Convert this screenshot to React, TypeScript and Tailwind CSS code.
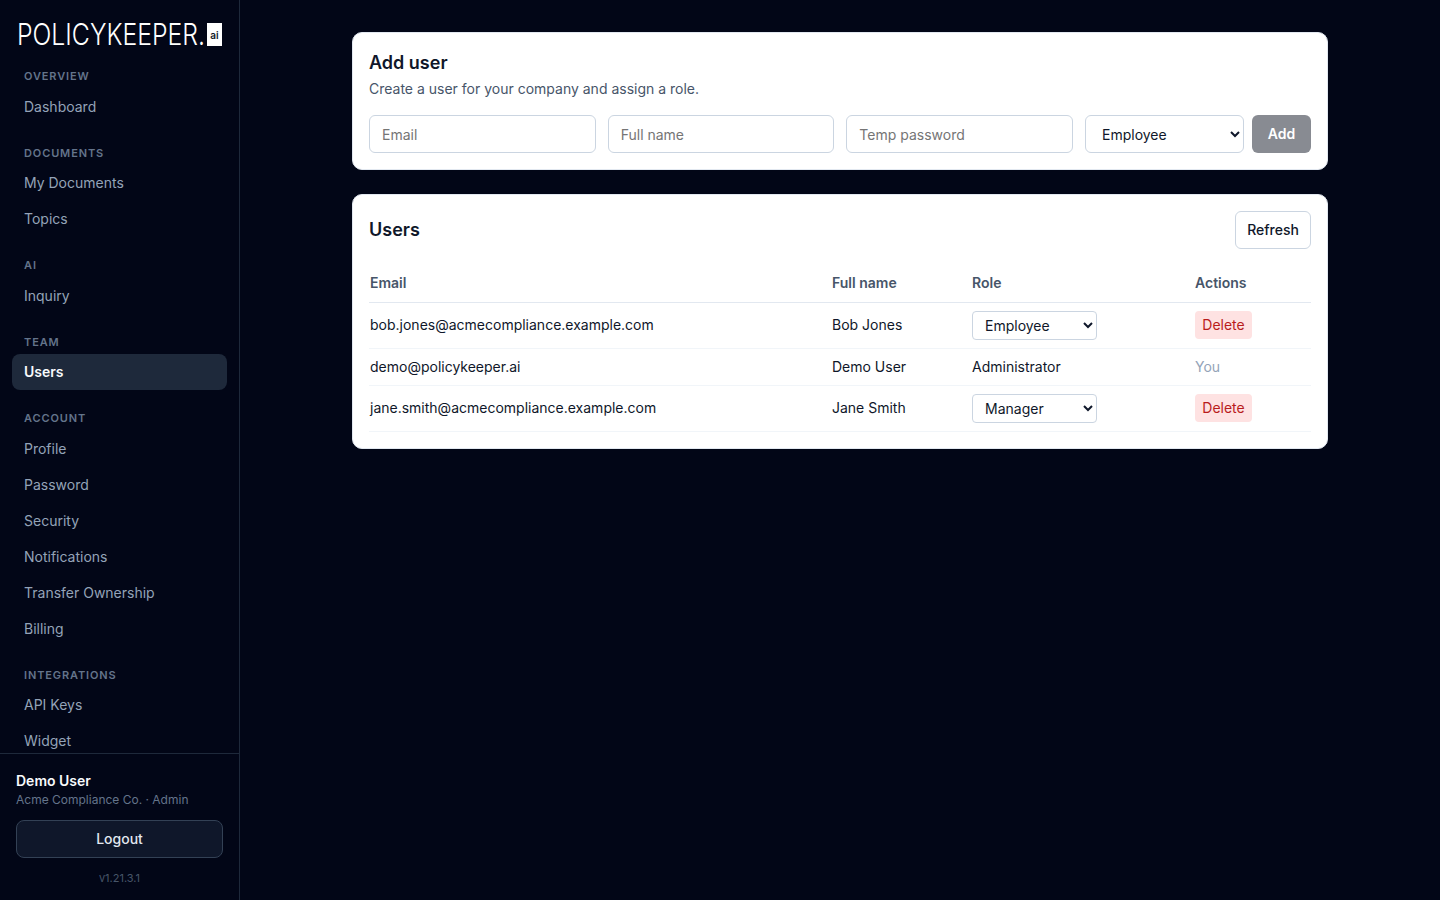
import React from "react";

type Section = { label: string; items: string[] };

const sections: Section[] = [
  { label: "OVERVIEW", items: ["Dashboard"] },
  { label: "DOCUMENTS", items: ["My Documents", "Topics"] },
  { label: "AI", items: ["Inquiry"] },
  { label: "TEAM", items: ["Users"] },
  { label: "ACCOUNT", items: ["Profile", "Password", "Security", "Notifications", "Transfer Ownership", "Billing"] },
  { label: "INTEGRATIONS", items: ["API Keys", "Widget"] },
];

const users = [
  { email: "bob.jones@acmecompliance.example.com", name: "Bob Jones", role: "Employee", self: false },
  { email: "demo@policykeeper.ai", name: "Demo User", role: "Administrator", self: true },
  { email: "jane.smith@acmecompliance.example.com", name: "Jane Smith", role: "Manager", self: false },
];

function Logo() {
  return (
    <div className="flex h-[68px] items-start pl-[17px] pt-[22px]">
      <svg width="206" height="26" viewBox="0 0 206 26">
        <text
          x="0"
          y="23"
          fill="#ffffff"
          fontSize="30"
          fontWeight="300"
          fontFamily="Inter, sans-serif"
          textLength="188"
          lengthAdjust="spacingAndGlyphs"
        >
          POLICYKEEPER.
        </text>
        <rect x="190" y="1" width="15" height="23" fill="#ffffff" />
        <text x="197.5" y="17" fill="#111827" fontSize="10" fontWeight="600" textAnchor="middle" fontFamily="Inter, sans-serif">
          ai
        </text>
      </svg>
    </div>
  );
}

function Sidebar() {
  return (
    <aside className="flex h-[900px] w-[240px] shrink-0 flex-col border-r border-[#1e293b] bg-[#020617]">
      <Logo />
      <nav className="min-h-0 flex-1 overflow-hidden pl-3 pr-3">
        {sections.map((section) => (
          <div key={section.label} className="mb-5">
            <div className="mb-1 px-3 text-[11px] leading-[16.5px] font-semibold tracking-[0.08em] text-[#64748b]">
              {section.label}
            </div>
            {section.items.map((item) => (
              <a
                key={item}
                href="#"
                className={
                  item === "Users"
                    ? "flex h-9 items-center rounded-lg bg-[#1e293b] px-3 text-sm font-semibold text-[#f8fafc]"
                    : "flex h-9 items-center rounded-lg px-3 text-sm text-[#94a3b8]"
                }
              >
                {item}
              </a>
            ))}
          </div>
        ))}
      </nav>
      <div className="h-[147px] shrink-0 border-t border-[#1e293b] px-4 pt-[17px]">
        <div className="text-sm leading-[20px] font-semibold text-[#f8fafc]">Demo User</div>
        <div className="mt-px text-xs leading-[16px] text-[#64748b]">Acme Compliance Co. · Admin</div>
        <button className="mt-3 h-[38px] w-full rounded-lg border border-[#334155] bg-[#0f172a] text-sm font-medium text-[#e2e8f0]">
          Logout
        </button>
        <div className="mt-3 text-center text-[11px] leading-[16px] text-[#475569]">v1.21.3.1</div>
      </div>
    </aside>
  );
}

function AddUserCard() {
  const inputClass =
    "h-[38px] w-full min-w-0 flex-1 rounded-md border border-[#cbd5e1] bg-white px-3 text-sm text-[#0f172a] placeholder:text-[#757575]";
  return (
    <section className="rounded-[10px] border border-[#e2e8f0] bg-white p-4">
      <h2 className="text-lg leading-[28px] font-semibold text-[#0f172a]">Add user</h2>
      <p className="mt-[2px] text-sm leading-[20px] text-[#475569]">Create a user for your company and assign a role.</p>
      <div className="mt-4 flex">
        <div className="flex flex-1 gap-3">
          <input className={inputClass} placeholder="Email" />
          <input className={inputClass} placeholder="Full name" />
          <input className={inputClass} placeholder="Temp password" />
          <select
            defaultValue="Employee"
            className="h-[38px] w-[159px] shrink-0 rounded-md border border-[#cbd5e1] bg-white px-3 text-sm text-[#0f172a]"
          >
            <option>Employee</option>
            <option>Manager</option>
            <option>Administrator</option>
          </select>
        </div>
        <button
          disabled
          className="ml-2 h-[38px] w-[59px] shrink-0 rounded-md bg-[#888b92] text-sm font-semibold text-white"
        >
          Add
        </button>
      </div>
    </section>
  );
}

function UsersCard() {
  return (
    <section className="mt-6 rounded-[10px] border border-[#e2e8f0] bg-white p-4">
      <div className="flex items-center justify-between">
        <h2 className="text-lg leading-[28px] font-semibold text-[#0f172a]">Users</h2>
        <button className="h-[38px] w-[76px] rounded-md border border-[#cbd5e1] bg-white text-sm font-medium text-[#0f172a]">
          Refresh
        </button>
      </div>
      <table className="mt-4 w-full table-fixed border-collapse text-left text-sm text-[#0f172a]">
        <colgroup>
          <col className="w-[462px]" />
          <col className="w-[140px]" />
          <col className="w-[223px]" />
          <col />
        </colgroup>
        <thead>
          <tr className="h-[37px] border-b border-[#e2e8f0] text-[#475569]">
            <th className="pl-px font-semibold">Email</th>
            <th className="pl-px font-semibold">Full name</th>
            <th className="pl-px font-semibold">Role</th>
            <th className="pl-px font-semibold">Actions</th>
          </tr>
        </thead>
        <tbody>
          {users.map((user) => (
            <tr key={user.email} className={user.self ? "h-[37px] border-b border-[#f1f5f9]" : "h-[46px] border-b border-[#f1f5f9]"}>
              <td className="pl-px">{user.email}</td>
              <td className="pl-px">{user.name}</td>
              <td className="pl-px">
                {user.self ? (
                  user.role
                ) : (
                  <select
                    defaultValue={user.role}
                    className="h-[29px] w-[125px] rounded border border-[#cbd5e1] bg-white px-2 align-middle text-sm text-[#0f172a]"
                  >
                    <option>Employee</option>
                    <option>Manager</option>
                    <option>Administrator</option>
                  </select>
                )}
              </td>
              <td className="pl-px">
                {user.self ? (
                  <span className="text-[#94a3b8]">You</span>
                ) : (
                  <button className="h-7 w-[57px] rounded bg-[#fee2e2] align-middle text-sm text-[#b91c1c]">Delete</button>
                )}
              </td>
            </tr>
          ))}
        </tbody>
      </table>
    </section>
  );
}

export default function App() {
  return (
    <div className="flex h-[900px] overflow-hidden bg-[#020617] font-['Inter',sans-serif]">
      <Sidebar />
      <main className="flex-1 pt-8">
        <div className="mx-auto w-[976px]">
          <AddUserCard />
          <UsersCard />
        </div>
      </main>
    </div>
  );
}
